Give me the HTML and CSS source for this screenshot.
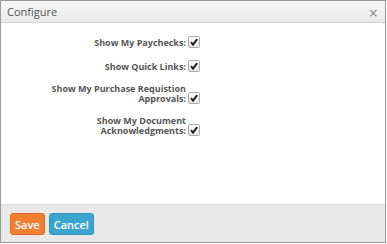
FILE: index.html
```html
<!DOCTYPE html>
<html lang="en">

<head>
    <meta charset="UTF-8">
    <title>Configure</title>
    <link rel="stylesheet" href="styles.css">
</head>

<body>
    <div class="dialog">
        <div class="dialog-header">
            <span class="dialog-title">Configure</span>
            <span class="close">&times;</span>
        </div>
        <div class="dialog-body">
            <div class="option">
                <label>Show My Paychecks:</label>
                <span class="check"><svg viewBox="0 0 10 10"><path d="M2 5.2 L4 7.6 L8.2 2.2" /></svg></span>
            </div>
            <div class="option">
                <label>Show Quick Links:</label>
                <span class="check"><svg viewBox="0 0 10 10"><path d="M2 5.2 L4 7.6 L8.2 2.2" /></svg></span>
            </div>
            <div class="option">
                <label>Show My Purchase Requistion Approvals:</label>
                <span class="check"><svg viewBox="0 0 10 10"><path d="M2 5.2 L4 7.6 L8.2 2.2" /></svg></span>
            </div>
            <div class="option">
                <label>Show My Document Acknowledgments:</label>
                <span class="check"><svg viewBox="0 0 10 10"><path d="M2 5.2 L4 7.6 L8.2 2.2" /></svg></span>
            </div>
        </div>
        <div class="dialog-footer">
            <button class="btn btn-save">Save</button>
            <button class="btn btn-cancel">Cancel</button>
        </div>
    </div>
</body>

</html>
```

FILE: styles.css
```css
body {
    margin: 0;
    font-family: "Open Sans", Arial, sans-serif;
    background: #fff;
}

.dialog {
    width: 384px;
    height: 241px;
    border: 1px solid #9a9a9a;
    display: flex;
    flex-direction: column;
}

.dialog-header {
    height: 21px;
    display: flex;
    align-items: center;
    justify-content: space-between;
    padding: 0 7px 0 6px;
    background: linear-gradient(#f7f7f7, #e9e9e9);
    border-bottom: 1px solid #d0d0d0;
}

.dialog-title {
    font-size: 11px;
    color: #555;
}

.close {
    font-size: 16px;
    color: #8a8a8a;
    line-height: 1;
    margin-top: 3px;
}

.dialog-body {
    flex: 1;
    padding-top: 13px;
    display: flex;
    flex-direction: column;
    gap: 12px;
}

.option {
    display: flex;
    align-items: flex-end;
}

.option label {
    width: 140px;
    margin-left: 45px;
    text-align: right;
    font-size: 9px;
    font-weight: 700;
    line-height: 10px;
    color: #555;
}

.check {
    width: 10px;
    height: 10px;
    margin-left: 2px;
    border: 1px solid #aaa;
    border-radius: 2px;
    background: linear-gradient(#fff, #e8e8e8);
    display: flex;
}

.check svg {
    width: 10px;
    height: 10px;
    fill: none;
    stroke: #222;
    stroke-width: 2;
}

.dialog-footer {
    height: 36px;
    padding-top: 1px;
    background: #e8e8e8;
    border-top: 1px solid #dedede;
    display: flex;
    align-items: center;
    gap: 4px;
    padding-left: 9px;
}

.btn {
    height: 22px;
    border: 1px solid transparent;
    border-radius: 3px;
    padding: 0 4px;
    font-family: "Open Sans", Arial, sans-serif;
    font-size: 11px;
    font-weight: 600;
    color: #fff;
}

.btn-save {
    background: #f07f33;
    border-color: #e06f23;
}

.btn-cancel {
    background: #3aa6cf;
    border-color: #2a96bf;
}
```
